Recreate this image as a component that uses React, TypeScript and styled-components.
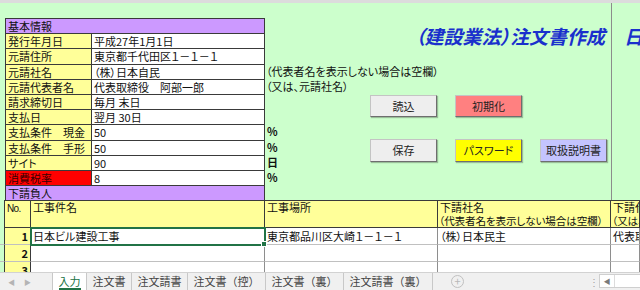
import styled, { createGlobalStyle } from "styled-components";

const GlobalStyle = createGlobalStyle`
  html, body {
    margin: 0;
    padding: 0;
  }
  body {
    width: 640px;
    height: 290px;
    overflow: hidden;
    background: #ffffff;
    font-family: "Noto Sans CJK JP", "Noto Sans", sans-serif;
    font-size: 11px;
    color: #111111;
    font-feature-settings: "palt";
  }
`;

const Page = styled.div`
  display: flex;
  flex-direction: column;
  width: 640px;
  height: 290px;
  overflow: hidden;
`;

const TopStrip = styled.div`
  height: 3px;
  background: #dcdcdc;
  flex: none;
`;

const Sheet = styled.div`
  height: 269px;
  background: #ccffcc;
  overflow: hidden;
  flex: none;
`;

const Upper = styled.div`
  display: grid;
  grid-template-columns: 5px 260px 105px 241px 1fr;
  grid-template-rows: 15px repeat(12, 15.2px);
`;

const NextCol = styled.div`
  grid-column: 5;
  grid-row: 1 / 14;
  border-left: 1px solid #8c8c8c;
`;

const InfoTable = styled.div`
  grid-column: 2;
  grid-row: 2 / 14;
  display: grid;
  grid-template-columns: 85px 1fr;
  grid-template-rows: repeat(12, 1fr);
  gap: 1px;
  padding: 1px 1px 0 1px;
  background: #3a3a3a;
`;

const Cell = styled.div<{ $bg?: string; $span?: boolean; $color?: string }>`
  display: flex;
  align-items: center;
  padding: 0 2px;
  background: ${(p) => p.$bg || "#ffffff"};
  color: ${(p) => p.$color || "#111111"};
  grid-column: ${(p) => (p.$span ? "1 / 3" : "auto")};
  white-space: nowrap;
  overflow: hidden;
  line-height: 14px;
`;

const Title = styled.div`
  grid-column: 3 / 5;
  grid-row: 2 / 5;
  padding: 4px 0 0 150px;
  white-space: nowrap;
  font-size: 19px;
  line-height: 28px;
  font-weight: 700;
  font-style: italic;
  color: #1a30cc;
  position: relative;
  z-index: 1;
`;

const Note = styled.div<{ $row: number }>`
  grid-column: 3 / 5;
  grid-row: ${(p) => p.$row};
  padding-left: 1px;
  white-space: nowrap;
  line-height: 15.2px;
`;

const Unit = styled.div<{ $row: number }>`
  grid-column: 3;
  grid-row: ${(p) => p.$row};
  padding-left: 2px;
  line-height: 15.2px;
  font-weight: 700;
`;

const ButtonArea = styled.div`
  grid-column: 4;
  grid-row: 7 / 12;
  display: grid;
  grid-template-columns: repeat(3, 67px);
  grid-template-rows: 22px 23px;
  column-gap: 18px;
  row-gap: 22px;
  padding-top: 1px;
  align-content: start;
`;

const SheetButton = styled.div<{ $bg: string; $col?: number }>`
  grid-column: ${(p) => p.$col || "auto"};
  display: flex;
  align-items: center;
  justify-content: center;
  background: ${(p) => p.$bg};
  border: 1px solid #c4c4c4;
  border-right-color: #6e6e6e;
  border-bottom-color: #6e6e6e;
  box-shadow: 1px 1px 1px rgba(0, 0, 0, 0.25);
  box-sizing: border-box;
  font-size: 11px;
  color: #222222;
`;

const Lower = styled.div`
  display: grid;
  grid-template-columns: 5px 26px 234px 173px 173px 1fr;
  grid-template-rows: 28px repeat(3, 17px);
`;

const HeadCell = styled.div<{ $edge?: boolean }>`
  background: ${(p) => (p.$edge ? "#ccffcc" : "#ffff99")};
  border-top: ${(p) => (p.$edge ? "none" : "1px solid #3a3a3a")};
  border-bottom: ${(p) => (p.$edge ? "none" : "1px solid #3a3a3a")};
  border-right: 1px solid #3a3a3a;
  box-sizing: border-box;
  padding: 0 2px;
  line-height: 13px;
  white-space: nowrap;
  overflow: hidden;
`;

const HeadSub = styled.span`
  display: block;
  margin-left: -1px;
  font-size: 10.6px;
  letter-spacing: -0.15px;
`;

const NoHead = styled(HeadCell)`
  font-family: "Liberation Sans Narrow", "Liberation Sans", sans-serif;
  font-size: 10px;
  letter-spacing: -0.6px;
  padding-top: 1px;
`;

const DataCell = styled.div<{ $kind?: "edge" | "no" | "text"; $active?: boolean }>`
  position: relative;
  background: ${(p) =>
    p.$kind === "edge" ? "#ccffcc" : p.$kind === "no" ? "#ffff99" : "#ffffff"};
  border-right: 1px solid
    ${(p) => (p.$kind === "edge" || p.$kind === "no" ? "#3a3a3a" : "#8e8e8e")};
  border-bottom: 1px solid #c0c0c0;
  box-sizing: border-box;
  padding: 0 2px;
  line-height: 16px;
  white-space: nowrap;
  overflow: ${(p) => (p.$active ? "visible" : "hidden")};
  text-align: ${(p) => (p.$kind === "no" ? "right" : "left")};
  font-weight: ${(p) => (p.$kind === "no" ? 700 : 400)};
  ${(p) =>
    p.$active &&
    `
    outline: 2px solid #217346;
    outline-offset: -1px;
    z-index: 2;
    &::after {
      content: "";
      position: absolute;
      right: -3px;
      bottom: -3px;
      width: 4px;
      height: 4px;
      background: #217346;
      border: 1px solid #ffffff;
    }
  `}
`;

const TabBar = styled.div`
  display: flex;
  align-items: stretch;
  height: 18px;
  background: #f0f0f0;
  border-top: 1px solid #d2d2d2;
  box-sizing: border-box;
  flex: none;
  font-feature-settings: normal;
`;

const NavArrows = styled.div`
  width: 53px;
  display: flex;
  align-items: center;
  gap: 9px;
  padding-left: 8px;
  box-sizing: border-box;
  color: #b4b4b4;
  font-size: 7px;
`;

const Tab = styled.div<{ $active?: boolean }>`
  display: flex;
  align-items: center;
  padding: 0 5.5px;
  background: ${(p) => (p.$active ? "#ffffff" : "transparent")};
  color: ${(p) => (p.$active ? "#217346" : "#444444")};
  border-right: 1px solid #c8c8c8;
  border-left: ${(p) => (p.$active ? "1px solid #c8c8c8" : "none")};
  margin-left: ${(p) => (p.$active ? "-1px" : "0")};
  font-size: 11px;
  white-space: nowrap;
`;

const TabLabel = styled.span<{ $active?: boolean }>`
  line-height: 13px;
  border-bottom: 2px solid ${(p) => (p.$active ? "#217346" : "transparent")};
  padding-top: 2px;
`;

const AddSheet = styled.div`
  width: 13px;
  height: 13px;
  margin: 2px 0 0 18px;
  border: 1px solid #c0c0c0;
  border-radius: 50%;
  box-sizing: border-box;
  color: #b8b8b8;
  font-size: 11px;
  line-height: 10px;
  text-align: center;
`;

const Spacer = styled.div`
  flex: 1;
`;

const Dots = styled.div`
  width: 10px;
  color: #a0a0a0;
  font-size: 10px;
  line-height: 17px;
`;

const ScrollBox = styled.div`
  width: 40px;
  margin: 1px 0 2px 0;
  display: flex;
  border: 1px solid #cfcfcf;
  border-right: none;
  background: #ffffff;
`;

const ScrollArrow = styled.div`
  width: 14px;
  border-right: 1px solid #dcdcdc;
  color: #7a7a7a;
  font-size: 7px;
  display: flex;
  align-items: center;
  justify-content: center;
`;

const infoRows: { label: string; value: string; bg?: string; color?: string }[] = [
  { label: "発行年月日", value: "平成27年1月1日" },
  { label: "元請住所", value: "東京都千代田区１－１－１" },
  { label: "元請社名", value: "（株）日本自民" },
  { label: "元請代表者名", value: "代表取締役　阿部一郎" },
  { label: "請求締切日", value: "毎月 末日" },
  { label: "支払日", value: "翌月 30日" },
  { label: "支払条件　現金", value: "50" },
  { label: "支払条件　手形", value: "50" },
  { label: "サイト", value: "90" },
  { label: "消費税率", value: "8", bg: "#ff0000", color: "#3a0000" },
];

const units = [
  { row: 9, text: "%" },
  { row: 10, text: "%" },
  { row: 11, text: "日" },
  { row: 12, text: "%" },
];

const dataRows = [
  ["1", "日本ビル建設工事", "東京都品川区大崎１－１－１", "（株）日本民主", "代表取締役"],
  ["2", "", "", "", ""],
  ["3", "", "", "", ""],
];

const tabs = ["入力", "注文書", "注文請書", "注文書（控）", "注文書（裏）", "注文請書（裏）"];

export default function App() {
  return (
    <Page>
      <GlobalStyle />
      <TopStrip />
      <Sheet>
        <Upper>
          <NextCol />
          <InfoTable>
            <Cell $bg="#cc99ff" $span>
              基本情報
            </Cell>
            {infoRows.map((r) => (
              <>
                <Cell key={r.label} $bg={r.bg || "#ffff99"} $color={r.color}>
                  {r.label}
                </Cell>
                <Cell key={r.label + "v"}>{r.value}</Cell>
              </>
            ))}
            <Cell $bg="#cc99ff" $span>
              下請負人
            </Cell>
          </InfoTable>
          <Title>（建設業法）注文書作成　日報</Title>
          <Note $row={5}>（代表者名を表示しない場合は空欄）</Note>
          <Note $row={6}>（又は、元請社名）</Note>
          {units.map((u) => (
            <Unit key={u.row} $row={u.row}>
              {u.text}
            </Unit>
          ))}
          <ButtonArea>
            <SheetButton $bg="#eeeeee">読込</SheetButton>
            <SheetButton $bg="#ff8080">初期化</SheetButton>
            <SheetButton $bg="#eeeeee" $col={1}>
              保存
            </SheetButton>
            <SheetButton $bg="#ffff00">パスワード</SheetButton>
            <SheetButton $bg="#c4c4ff">取扱説明書</SheetButton>
          </ButtonArea>
        </Upper>
        <Lower>
          <HeadCell $edge />
          <NoHead>No.</NoHead>
          <HeadCell>工事件名</HeadCell>
          <HeadCell>工事場所</HeadCell>
          <HeadCell>
            下請社名
            <HeadSub>（代表者名を表示しない場合は空欄）</HeadSub>
          </HeadCell>
          <HeadCell>
            下請代表者名
            <HeadSub>（又は、下請社名）</HeadSub>
          </HeadCell>
          {dataRows.map((r, i) => (
            <>
              <DataCell key={"e" + i} $kind="edge" />
              <DataCell key={"n" + i} $kind="no">
                {r[0]}
              </DataCell>
              <DataCell key={"a" + i} $active={i === 0}>
                {r[1]}
              </DataCell>
              <DataCell key={"b" + i}>{r[2]}</DataCell>
              <DataCell key={"c" + i}>{r[3]}</DataCell>
              <DataCell key={"d" + i}>{r[4]}</DataCell>
            </>
          ))}
        </Lower>
      </Sheet>
      <TabBar>
        <NavArrows>
          <span>◀</span>
          <span>▶</span>
        </NavArrows>
        {tabs.map((t, i) => (
          <Tab key={t} $active={i === 0}>
            <TabLabel $active={i === 0}>{t}</TabLabel>
          </Tab>
        ))}
        <AddSheet>+</AddSheet>
        <Spacer />
        <Dots>⋮</Dots>
        <ScrollBox>
          <ScrollArrow>◀</ScrollArrow>
        </ScrollBox>
      </TabBar>
    </Page>
  );
}
